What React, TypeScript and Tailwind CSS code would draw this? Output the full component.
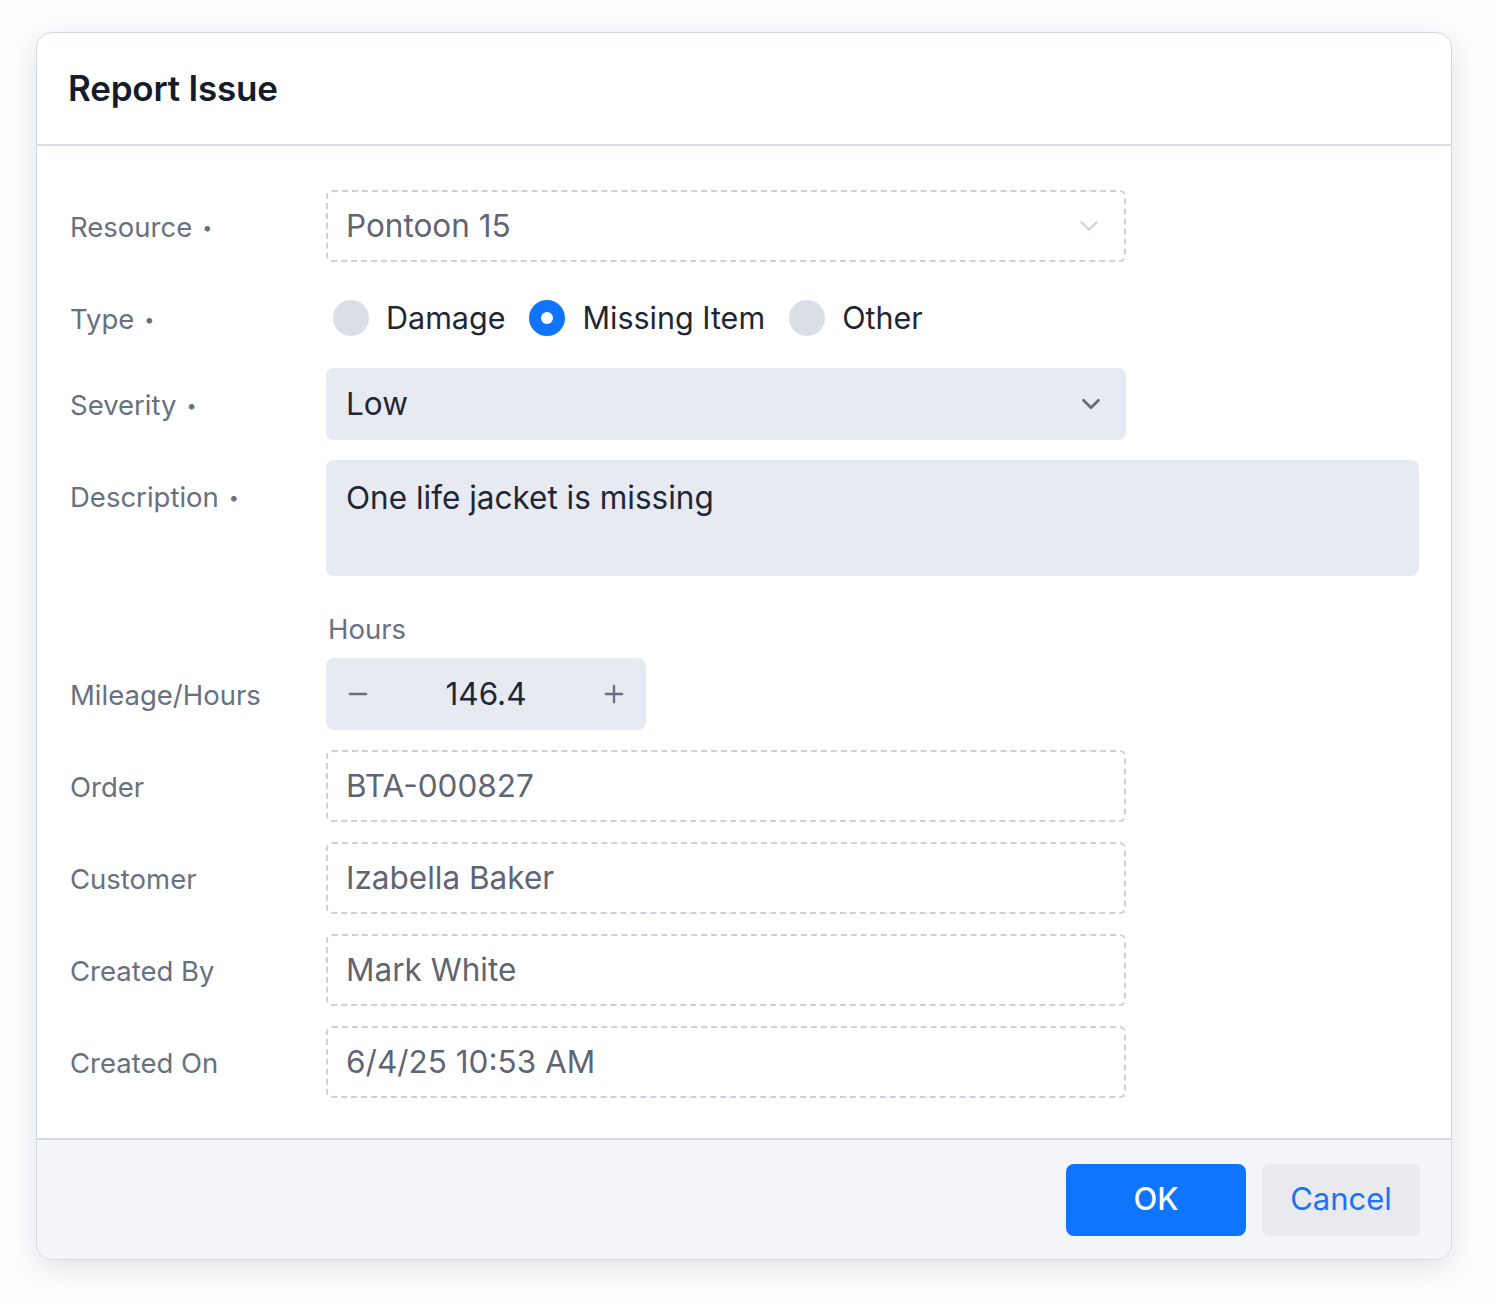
import { ChevronDown, Minus, Plus } from 'lucide-react';

const FONT = { fontFamily: 'Inter, "Noto Sans", sans-serif' };

function Label({ text, required }: { text: string; required?: boolean }) {
  return (
    <div className="h-[72px] pt-[3px] flex items-center text-[27.5px] text-[#697080]">
      {text}
      {required && <span className="ml-[10px] text-[18px] leading-none">•</span>}
    </div>
  );
}

function ReadOnly({ value, chevron }: { value: string; chevron?: boolean }) {
  return (
    <div className="w-[800px] h-[72px] border-2 border-dashed border-[#cdd1dc] rounded-[6px] px-[18px] flex items-center justify-between">
      <span className="text-[31.5px] text-[#5f6574]">{value}</span>
      {chevron && <ChevronDown className="w-[30px] h-[30px] text-[#cfd3dc] mr-[2px]" strokeWidth={1.8} />}
    </div>
  );
}

function Radio({ label, checked }: { label: string; checked?: boolean }) {
  return (
    <div className="flex items-center gap-[17px]">
      {checked ? (
        <div className="w-[36px] h-[36px] rounded-full bg-[#0f74ff] flex items-center justify-center">
          <div className="w-[12px] h-[12px] rounded-full bg-white" />
        </div>
      ) : (
        <div className="w-[36px] h-[36px] rounded-full bg-[#dcdee5]" />
      )}
      <span className="text-[30.5px] text-[#1f2636]">{label}</span>
    </div>
  );
}

export default function App() {
  return (
    <div className="min-h-[1304px] bg-[#fdfdfe] pt-[32px] pl-[36px]" style={FONT}>
      <div className="w-[1416px] bg-white rounded-[16px] border border-[#d3d8e2] shadow-[0_8px_28px_rgba(30,40,70,0.12)] overflow-hidden">
        {/* header */}
        <div className="h-[113px] border-b-2 border-[#dadee7] px-[31px] flex items-center">
          <h1 className="text-[35px] font-semibold text-[#141b2b] tracking-[-0.2px]">Report Issue</h1>
        </div>

        {/* form */}
        <div className="pl-[33px] pr-[32px] pt-[44px] pb-[40px] flex flex-col">
          <div className="grid grid-cols-[256px_1fr] items-start">
            <Label text="Resource" required />
            <ReadOnly value="Pontoon 15" chevron />
          </div>

          <div className="grid grid-cols-[256px_1fr] items-start mt-5">
            <Label text="Type" required />
            <div className="h-[72px] flex items-center gap-[24px] pl-[7px]">
              <Radio label="Damage" />
              <Radio label="Missing Item" checked />
              <Radio label="Other" />
            </div>
          </div>

          <div className="grid grid-cols-[256px_1fr] items-start mt-[14px]">
            <Label text="Severity" required />
            <div className="w-[800px] h-[72px] bg-[#e8eaf1] rounded-[8px] pl-[20px] pr-[20px] flex items-center justify-between">
              <span className="text-[31.5px] text-[#1f2636]">Low</span>
              <ChevronDown className="w-[30px] h-[30px] text-[#646b7a]" strokeWidth={2.2} />
            </div>
          </div>

          <div className="grid grid-cols-[256px_1fr] items-start mt-5">
            <Label text="Description" required />
            <div className="h-[116px] bg-[#e8eaf1] rounded-[8px] px-[20px] pt-[14px]">
              <span className="text-[31.5px] text-[#1f2636]">One life jacket is missing</span>
            </div>
          </div>

          <div className="grid grid-cols-[256px_1fr] items-end mt-[38px]">
            <Label text="Mileage/Hours" />
            <div className="flex flex-col">
              <div className="h-[32px] flex items-center text-[27.5px] text-[#697080] pl-[2px] mb-3">Hours</div>
              <div className="w-[320px] h-[72px] bg-[#e8eaf1] rounded-[8px] px-[18px] flex items-center justify-between">
                <Minus className="w-[28px] h-[28px] text-[#687081]" strokeWidth={2} />
                <span className="text-[31.5px] text-[#1f2636]">146.4</span>
                <Plus className="w-[28px] h-[28px] text-[#687081]" strokeWidth={2} />
              </div>
            </div>
          </div>

          <div className="grid grid-cols-[256px_1fr] items-start mt-5">
            <Label text="Order" />
            <ReadOnly value="BTA-000827" />
          </div>

          <div className="grid grid-cols-[256px_1fr] items-start mt-5">
            <Label text="Customer" />
            <ReadOnly value="Izabella Baker" />
          </div>

          <div className="grid grid-cols-[256px_1fr] items-start mt-5">
            <Label text="Created By" />
            <ReadOnly value="Mark White" />
          </div>

          <div className="grid grid-cols-[256px_1fr] items-start mt-5">
            <Label text="Created On" />
            <ReadOnly value="6/4/25 10:53 AM" />
          </div>
        </div>

        {/* footer */}
        <div className="border-t-2 border-[#d5d9e3] bg-[#f4f5f9] h-[121px] px-[31px] flex items-center justify-end gap-4">
          <button className="w-[180px] h-[72px] rounded-[8px] bg-[#0f74ff] text-white text-[31px] font-medium">OK</button>
          <button className="w-[158px] h-[72px] rounded-[8px] bg-[#e8eaf0] text-[#1a73f5] text-[31px]">Cancel</button>
        </div>
      </div>
    </div>
  );
}
